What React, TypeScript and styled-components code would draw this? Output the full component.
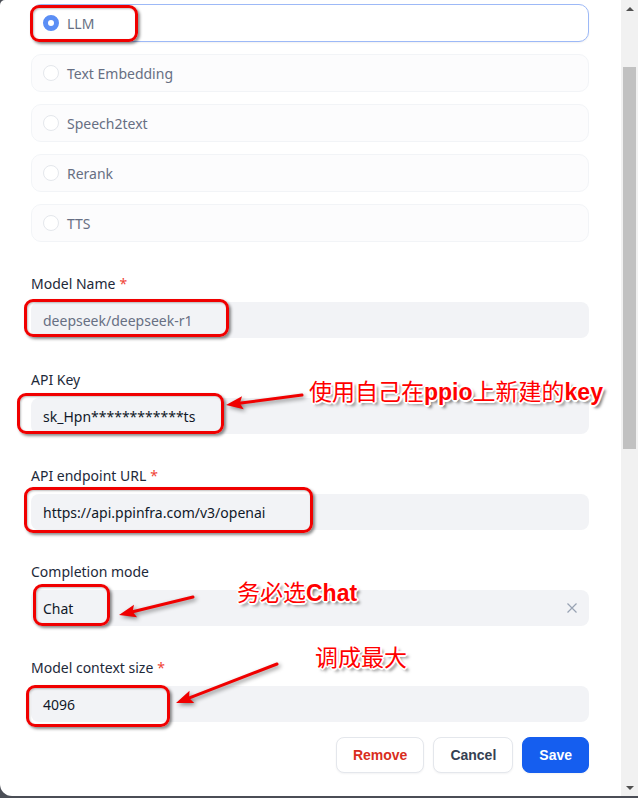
import React from 'react';
import styled, { createGlobalStyle } from 'styled-components';

const GlobalStyle = createGlobalStyle`
    html, body {
        margin: 0;
        padding: 0;
        background: #4b4e56;
    }
    * {
        box-sizing: border-box;
    }
`;

const Frame = styled.div`
    display: flex;
    width: 638px;
    height: 796px;
`;

const Panel = styled.div`
    position: relative;
    flex: 1;
    background: #ffffff;
    border-radius: 5px 0 0 12px;
    padding: 4px 32px 0 31px;
    overflow: hidden;
    font-family: "Noto Sans", "Noto Sans CJK SC", sans-serif;
    font-size: 14px;
`;

const ScrollBar = styled.div`
    width: 17px;
    background: #f1f1f1;
    display: flex;
    flex-direction: column;
`;

const ScrollButton = styled.div`
    height: 17px;
    display: flex;
    align-items: center;
    justify-content: center;
`;

const Triangle = styled.div<{ $down?: boolean }>`
    width: 0;
    height: 0;
    border-left: 4px solid transparent;
    border-right: 4px solid transparent;
    ${(p) => (p.$down ? 'border-top: 4px solid #505050;' : 'border-bottom: 4px solid #505050;')}
`;

const Track = styled.div`
    flex: 1;
    padding: 50px 2px 0;
`;

const Thumb = styled.div`
    height: 382px;
    background: #c1c1c1;
`;

const RadioList = styled.div`
    display: flex;
    flex-direction: column;
    gap: 12px;
`;

const RadioItem = styled.div<{ $active?: boolean }>`
    height: 38px;
    display: flex;
    align-items: center;
    gap: 8px;
    padding: 0 11px;
    border-radius: 10px;
    border: 1px solid ${(p) => (p.$active ? '#9db9f7' : '#f2f4f7')};
    background: ${(p) => (p.$active ? '#ffffff' : '#fcfcfd')};
    box-shadow: ${(p) => (p.$active ? '0 1px 2px rgba(16, 24, 40, 0.06)' : 'none')};
    color: #676f83;
`;

const RadioDot = styled.span<{ $active?: boolean }>`
    width: 16px;
    height: 16px;
    border-radius: 50%;
    background: #ffffff;
    border: ${(p) => (p.$active ? '5px solid #5b8ef5' : '1px solid #e4e7ec')};
`;

const Fields = styled.div`
    margin-top: 32px;
    display: flex;
    flex-direction: column;
    gap: 32px;
`;

const Field = styled.div`
    display: flex;
    flex-direction: column;
    gap: 8px;
`;

const Label = styled.div`
    line-height: 20px;
    color: #1d2939;
`;

const Star = styled.span`
    color: #f04438;
    margin-left: 4px;
`;

const InputBox = styled.div<{ $muted?: boolean }>`
    height: 36px;
    display: flex;
    align-items: center;
    justify-content: space-between;
    padding: 0 11px 0 12px;
    border-radius: 8px;
    background: #f2f3f6;
    color: ${(p) => (p.$muted ? '#676f83' : '#101828')};
`;

const ClearIcon = styled.svg`
    width: 12px;
    height: 12px;
    color: #98a2b3;
`;

const Footer = styled.div`
    margin-top: 15px;
    display: flex;
    justify-content: flex-end;
    gap: 9px;
`;

const Button = styled.button<{ $variant: 'danger' | 'default' | 'primary' }>`
    height: 36px;
    padding: 0 16px;
    border-radius: 8px;
    font-family: "Liberation Sans", sans-serif;
    font-size: 14px;
    font-weight: 700;
    border: 1px solid ${(p) => (p.$variant === 'primary' ? '#155eef' : '#e4e7ec')};
    background: ${(p) => (p.$variant === 'primary' ? '#155eef' : '#ffffff')};
    color: ${(p) => (p.$variant === 'primary' ? '#ffffff' : p.$variant === 'danger' ? '#d92d20' : '#354052')};
    box-shadow: 0 1px 2px rgba(16, 24, 40, 0.05);
`;

/* annotation layer drawn over the form */
const MarkBox = styled.div`
    position: absolute;
    border: 3px solid #f00000;
    border-radius: 9px;
    box-shadow: 2px 2px 3px rgba(0, 0, 0, 0.45), inset 1px 1px 2px rgba(0, 0, 0, 0.25);
`;

const Note = styled.div`
    position: absolute;
    font-family: "Liberation Sans", "Noto Sans CJK SC", sans-serif;
    font-size: 23px;
    line-height: 23px;
    color: #ff0000;
    white-space: nowrap;
    text-shadow: -1px -1px 0 #fff, 1px -1px 0 #fff, -1px 1px 0 #fff, 1px 1px 0 #fff,
        0 -2px 0 #fff, 0 2px 0 #fff, -2px 0 0 #fff, 2px 0 0 #fff,
        3px 3px 3px rgba(0, 0, 0, 0.55);

    b {
        font-weight: 700;
    }
`;

const ArrowLayer = styled.svg`
    position: absolute;
    left: 0;
    top: 0;
    width: 100%;
    height: 100%;
    pointer-events: none;
    filter: drop-shadow(2px 2px 2px rgba(0, 0, 0, 0.45));
`;

const marks = [
    { left: 30, top: 5, width: 108, height: 37 },
    { left: 24, top: 299, width: 205, height: 38 },
    { left: 17, top: 393, width: 207, height: 41 },
    { left: 24, top: 487, width: 289, height: 46 },
    { left: 33, top: 584, width: 77, height: 42 },
    { left: 26, top: 685, width: 144, height: 42 },
];

const arrows = [
    { x1: 302, y1: 395, x2: 226, y2: 405 },
    { x1: 193, y1: 597, x2: 119, y2: 615 },
    { x1: 277, y1: 664, x2: 176, y2: 703 },
];

const Arrow = ({ x1, y1, x2, y2 }: { x1: number; y1: number; x2: number; y2: number }): JSX.Element => {
    const dx = x2 - x1;
    const dy = y2 - y1;
    const len = Math.hypot(dx, dy);
    const ux = dx / len;
    const uy = dy / len;
    const headLen = 17;
    const headW = 6.5;
    const bx = x2 - ux * headLen;
    const by = y2 - uy * headLen;
    const head = `${x2},${y2} ${bx - uy * headW},${by + ux * headW} ${bx + ux * 3},${by + uy * 3} ${bx + uy * headW},${by - ux * headW}`;
    return (
        <g>
            <line x1={x1} y1={y1} x2={bx + ux * 4} y2={by + uy * 4} stroke="#f00000" strokeWidth={3} strokeLinecap="round" />
            <polygon points={head} fill="#f00000" />
        </g>
    );
};

const types = ['LLM', 'Text Embedding', 'Speech2text', 'Rerank', 'TTS'];

const App = (): JSX.Element => {
    return (
        <>
            <GlobalStyle />
            <Frame>
                <Panel>
                    <RadioList>
                        {types.map((t, i) => (
                            <RadioItem key={t} $active={i === 0}>
                                <RadioDot $active={i === 0} />
                                {t}
                            </RadioItem>
                        ))}
                    </RadioList>

                    <Fields>
                        <Field>
                            <Label>Model Name<Star>*</Star></Label>
                            <InputBox $muted>deepseek/deepseek-r1</InputBox>
                        </Field>
                        <Field>
                            <Label>API Key</Label>
                            <InputBox>sk_Hpn************ts</InputBox>
                        </Field>
                        <Field>
                            <Label>API endpoint URL<Star>*</Star></Label>
                            <InputBox>https://api.ppinfra.com/v3/openai</InputBox>
                        </Field>
                        <Field>
                            <Label>Completion mode</Label>
                            <InputBox>
                                Chat
                                <ClearIcon viewBox="0 0 12 12" fill="none" stroke="currentColor" strokeWidth={1.2}>
                                    <path d="M1.5 1.5l9 9M10.5 1.5l-9 9" />
                                </ClearIcon>
                            </InputBox>
                        </Field>
                        <Field>
                            <Label>Model context size<Star>*</Star></Label>
                            <InputBox>4096</InputBox>
                        </Field>
                    </Fields>

                    <Footer>
                        <Button $variant="danger">Remove</Button>
                        <Button $variant="default">Cancel</Button>
                        <Button $variant="primary">Save</Button>
                    </Footer>

                    {marks.map((m, i) => (
                        <MarkBox key={i} style={{ left: m.left, top: m.top, width: m.width, height: m.height }} />
                    ))}
                    <ArrowLayer>
                        {arrows.map((a, i) => (
                            <Arrow key={i} {...a} />
                        ))}
                    </ArrowLayer>
                    <Note style={{ left: 309, top: 381 }}>使用自己在<b>ppio</b>上新建的<b>key</b></Note>
                    <Note style={{ left: 237, top: 582 }}>务必选<b>Chat</b></Note>
                    <Note style={{ left: 315, top: 647 }}>调成最大</Note>
                </Panel>
                <ScrollBar>
                    <ScrollButton><Triangle /></ScrollButton>
                    <Track><Thumb /></Track>
                    <ScrollButton><Triangle $down /></ScrollButton>
                </ScrollBar>
            </Frame>
        </>
    );
};

export default App;
